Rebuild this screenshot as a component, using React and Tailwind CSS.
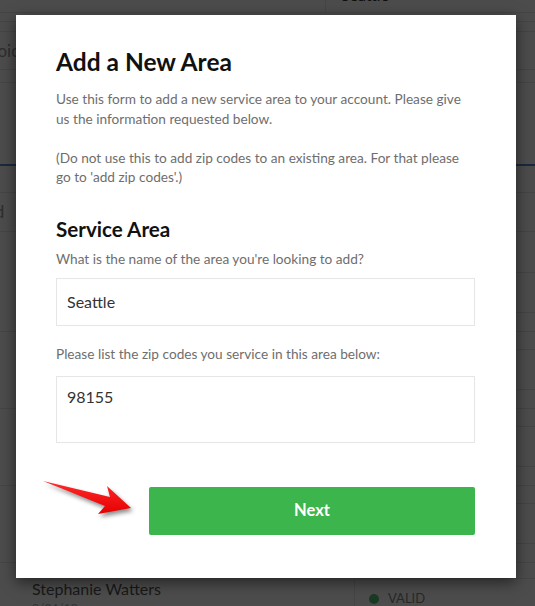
import React from "react";

function MajorRow({ children }) {
  return (
    <div className="flex h-[77px] border-b border-[#e8e8e8]">
      <div className="flex-1">{children}</div>
      <div className="w-[181px] flex flex-col">
        <div className="h-[18px] border-b border-[#e8e8e8]"></div>
        <div className="h-[40px] border-b border-[#e8e8e8]"></div>
        <div className="flex-1"></div>
      </div>
    </div>
  );
}

export default function App() {
  return (
    <div
      className="relative w-[535px] h-[606px] overflow-hidden bg-white"
      style={{ fontFamily: "Lato, 'Open Sans', sans-serif" }}
    >
      {/* background page */}
      <div className="flex flex-col text-[#666]">
        <div className="flex h-[13px] border-b border-[#e8e8e8]">
          <div className="w-[325px]"></div>
          <div className="flex-1 border-l border-[#e8e8e8] pl-[15px] -mt-[17px] text-[16px] leading-[24px] text-[#333]">
            Seattle
          </div>
        </div>
        <div className="h-[9px] border-b border-[#e8e8e8]"></div>
        <div className="h-[10px] border-b border-[#e8e8e8]"></div>
        <div className="h-[38px] border-b border-[#e8e8e8] flex items-center -ml-[25px] text-[17px] text-[#999]">
          Invoice
        </div>
        <div className="h-[13px] border-b border-[#e8e8e8]"></div>
        <div className="h-[81px]"></div>
        <div className="h-[2px] bg-[#5b86d0]"></div>
        <div className="h-[27px] border-b border-[#e8e8e8]"></div>
        <div className="h-[39px] border-b border-[#e8e8e8] flex items-center -ml-[32px] text-[17px] text-[#999]">
          Valid
        </div>
        <div className="h-[23px]"></div>
        <MajorRow />
        <MajorRow />
        <MajorRow />
        <MajorRow />
        <div className="flex h-[60px]">
          <div className="flex-1 pl-[32px] pt-[14px]">
            <div className="text-[16px] leading-[24px] text-[#555]">Stephanie Watters</div>
            <div className="text-[12px] leading-[14px] text-[#aaa]">9/24/18</div>
          </div>
          <div className="w-[181px] flex flex-col">
            <div className="h-[16px] border-b border-[#e8e8e8]"></div>
            <div className="flex-1 border-l border-[#e8e8e8] pl-[14px]">
              <div className="mt-[13px] h-[14px] flex items-center gap-[9px]">
                <span className="w-[10px] h-[10px] rounded-full bg-[#58c27a]"></span>
                <span className="text-[13px] text-[#888]">VALID</span>
              </div>
            </div>
          </div>
        </div>
      </div>

      {/* overlay */}
      <div className="absolute inset-0 bg-black/70"></div>

      {/* modal */}
      <div className="absolute left-[16px] top-[15px] w-[500px] h-[563px] bg-white shadow-[0_4px_14px_rgba(0,0,0,0.55)] pl-10 pr-[41px] pt-[31px] flex flex-col">
        <h1 className="text-[24.5px] leading-[32px] font-bold text-[#111]">Add a New Area</h1>
        <p className="mt-[12px] text-[13.65px] leading-[19.5px] text-[#6e6e6e]">
          Use this form to add a new service area to your account. Please give us the information requested below.
          <br />
          <br />
          (Do not use this to add zip codes to an existing area. For that please go to 'add zip codes'.)
        </p>
        <h2 className="mt-[27px] text-[20.6px] leading-[28px] font-bold text-[#111]">Service Area</h2>
        <label className="mt-[6px] text-[13.65px] leading-[20px] text-[#6e6e6e]">
          What is the name of the area you're looking to add?
        </label>
        <input
          readOnly
          value="Seattle"
          className="mt-[9px] h-[48px] w-full border border-[#e6e6e6] px-[10px] text-[16px] text-[#333] outline-none"
        />
        <label className="mt-[18px] text-[13.65px] leading-[20px] text-[#6e6e6e]">
          Please list the zip codes you service in this area below:
        </label>
        <textarea
          readOnly
          value="98155"
          className="mt-[12px] h-[67px] w-full resize-none border border-[#e6e6e6] px-[10px] pt-[9px] text-[16px] leading-[22px] text-[#333] outline-none"
        />
        <button className="mt-[44px] ml-auto w-[326px] h-[48px] rounded-[2px] bg-[#3bb54c] text-white text-[16.5px] font-bold">
          Next
        </button>
      </div>

      {/* red arrow */}
      <svg
        className="absolute left-[38px] top-[476px] drop-shadow-[2px_3px_2px_rgba(0,0,0,0.45)]"
        width="100"
        height="45"
        viewBox="0 0 100 45"
      >
        <defs>
          <linearGradient id="ar" x1="0" y1="0" x2="0" y2="1">
            <stop offset="0" stopColor="#ff2a2a" />
            <stop offset="1" stopColor="#e60000" />
          </linearGradient>
        </defs>
        <polygon points="5,5 72,21 69,10 93,32 60,38 67,30" fill="url(#ar)" />
      </svg>
    </div>
  );
}
